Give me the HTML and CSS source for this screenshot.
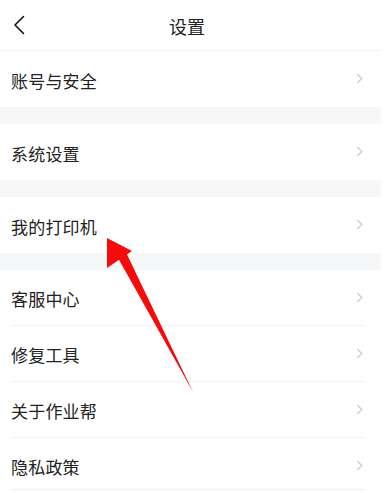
FILE: index.html
```html
<!DOCTYPE html>
<html lang="zh-CN">
<head>
<meta charset="utf-8">
<title>设置</title>
<link rel="stylesheet" href="styles.css">
</head>
<body>
<div class="screen">
  <header class="nav">
    <svg class="back" width="12" height="20" viewBox="0 0 12 20"><polyline points="10.5,1.5 2,10 10.5,18.5" fill="none" stroke="#111" stroke-width="1.6" stroke-linecap="round" stroke-linejoin="round"/></svg>
    <h1 class="title">设置</h1>
  </header>

  <div class="row row-solo"><span class="label">账号与安全</span><svg class="chev" width="7" height="11" viewBox="0 0 7 11"><polyline points="1,1 6,5.5 1,10" fill="none" stroke="#c9c9c9" stroke-width="1.2"/></svg></div>
  <div class="gap"></div>
  <div class="row row-solo"><span class="label">系统设置</span><svg class="chev" width="7" height="11" viewBox="0 0 7 11"><polyline points="1,1 6,5.5 1,10" fill="none" stroke="#c9c9c9" stroke-width="1.2"/></svg></div>
  <div class="gap"></div>
  <div class="row row-solo"><span class="label">我的打印机</span><svg class="chev" width="7" height="11" viewBox="0 0 7 11"><polyline points="1,1 6,5.5 1,10" fill="none" stroke="#c9c9c9" stroke-width="1.2"/></svg></div>
  <div class="gap"></div>

  <div class="list">
    <div class="row row-line"><span class="label">客服中心</span><svg class="chev" width="7" height="11" viewBox="0 0 7 11"><polyline points="1,1 6,5.5 1,10" fill="none" stroke="#c9c9c9" stroke-width="1.2"/></svg></div>
    <div class="row row-line"><span class="label">修复工具</span><svg class="chev" width="7" height="11" viewBox="0 0 7 11"><polyline points="1,1 6,5.5 1,10" fill="none" stroke="#c9c9c9" stroke-width="1.2"/></svg></div>
    <div class="row row-line"><span class="label">关于作业帮</span><svg class="chev" width="7" height="11" viewBox="0 0 7 11"><polyline points="1,1 6,5.5 1,10" fill="none" stroke="#c9c9c9" stroke-width="1.2"/></svg></div>
    <div class="row row-line row-last"><span class="label">隐私政策</span><svg class="chev" width="7" height="11" viewBox="0 0 7 11"><polyline points="1,1 6,5.5 1,10" fill="none" stroke="#c9c9c9" stroke-width="1.2"/></svg></div>
  </div>
</div>

<svg class="annot" width="389" height="493" viewBox="0 0 389 493">
  <polygon points="107,238 132,251 127,254.5 193,392 119,259.8 107,268" fill="#f60a0a"/>
</svg>
</body>
</html>
```

FILE: styles.css
```css
* { box-sizing: border-box; }
html, body { margin: 0; padding: 0; background: #fff; }
body {
  width: 389px;
  height: 493px;
  overflow: hidden;
  position: relative;
  font-family: "Noto Sans CJK SC", "Noto Sans", sans-serif;
  color: #222;
}
.screen {
  width: 381px;
  background: #fff;
}
.nav {
  height: 51px;
  border-bottom: 1px solid #f1f1f1;
  display: flex;
  align-items: center;
  justify-content: center;
  position: relative;
}
.back {
  position: absolute;
  left: 13px;
  top: 15px;
}
.title {
  margin: 0 7px 0 0;
  font-size: 18px;
  font-weight: 400;
  color: #222;
  line-height: 1;
  padding-top: 1px;
}
.row {
  display: flex;
  align-items: center;
  justify-content: space-between;
  font-size: 17px;
  line-height: 1;
}
.row-solo {
  height: 56px;
  padding: 2px 18px 0 11px;
}
.gap {
  height: 17px;
  background: #f6f7f9;
}
.list { padding: 0 16px 0 11px; }
.row-line {
  height: 56px;
  padding: 2px 2px 0 0;
  border-bottom: 1px solid #f1f1f1;
}
.row-last {
  height: 52px;
  padding-top: 6px;
}
.label { letter-spacing: 0.2px; }
.chev { display: block; margin-top: -3px; }
.annot {
  position: absolute;
  left: 0;
  top: 0;
  pointer-events: none;
}
```
